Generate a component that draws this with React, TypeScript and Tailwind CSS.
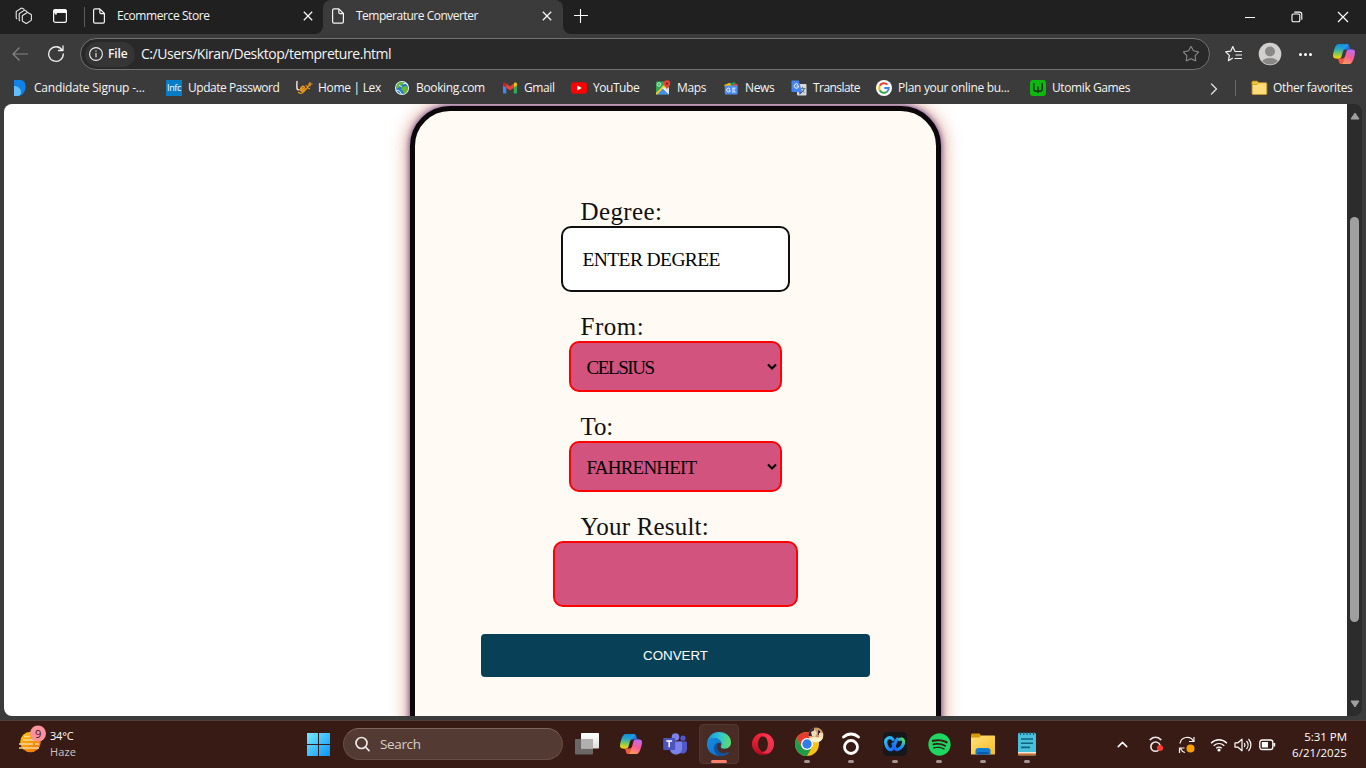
import React from "react";
import { ChevronRight, ChevronUp, Star } from "lucide-react";
import { FaSpotify } from "react-icons/fa";

type IconProps = { className?: string };

const PageIcon = ({ className = "" }: IconProps) => (
  <svg className={className} width="14" height="16" viewBox="0 0 14 16" fill="none" stroke="#f4f4f4" strokeWidth="1.2" strokeLinejoin="round">
    <path d="M1.6 2.2C1.6 1.4 2.1.8 3 .8h4.8l4.6 4.7v8.3c0 .8-.6 1.4-1.4 1.4H3c-.8 0-1.4-.6-1.4-1.4zM7.8 1v3.4c0 .7.4 1.2 1.2 1.2h3.2" />
  </svg>
);

const CloseIcon = ({ className = "" }: IconProps) => (
  <svg className={className} width="10" height="10" viewBox="0 0 10 10" stroke="#f4f4f4" strokeWidth="1.300"><path d="M.8.8l8.400 8.400M9.200.8L.8 9.200" /></svg>
);

const WorkspacesIcon = () => (
  <svg width="18" height="18" viewBox="0 0 18 18" fill="none" stroke="#e8e8e8" strokeWidth="1.1" strokeLinejoin="round" strokeLinecap="round">
    <path d="M7.900 8.200l4-2.500c.4-.2.800-.2 1.200 0l2.700 1.500c.4.2.600.5.600.9v4.600c0 .4-.2.700-.6.900l-3.900 2.600c-.4.200-.8.200-1.100 0l-2.900-1.600c-.4-.2-.6-.5-.6-.9V9.100c0-.4.200-.7.600-.9z" />
    <path d="M4.700 13.800c-.4-.2-.5-.5-.5-.9V7.100c0-.4.200-.7.600-.9l4.300-2.800c.4-.2.800-.2 1.100 0l1.800 1" />
    <path d="M1.700 11.700c-.4-.2-.5-.5-.5-.9V5c0-.4.200-.7.600-.9L6.200 1.300c.4-.2.800-.2 1.100 0l1.800 1" />
  </svg>
);

const TabActionsIcon = () => (
  <svg width="14" height="14" viewBox="0 0 14 14" fill="none" stroke="#f5f5f5" strokeWidth="1.2">
    <rect x=".6" y=".6" width="12.800" height="12.800" rx="2" />
    <path d="M.6 3.300V2.500c0-1 .8-1.900 1.900-1.900h9c1.100 0 1.900.9 1.900 1.900v.8z" fill="#fff" />
    <path d="M2.800 3.500v2" strokeWidth="2.200" />
  </svg>
);

const CopilotIcon = ({ id, size }: { id: string; size: number }) => (
  <svg width={size} height={size} viewBox="0 -1 24 24">
    <defs>
      <linearGradient id={id + "a"} x1="6" y1="0" x2="5" y2="16" gradientUnits="userSpaceOnUse">
        <stop stopColor="#0d91e1" /><stop offset=".35" stopColor="#2ba8c4" /><stop offset=".65" stopColor="#7fc85a" /><stop offset="1" stopColor="#ffd500" />
      </linearGradient>
      <linearGradient id={id + "b"} x1="20" y1="6" x2="13" y2="22" gradientUnits="userSpaceOnUse">
        <stop stopColor="#b66cf5" /><stop offset=".5" stopColor="#fa5c91" /><stop offset="1" stopColor="#ff9e60" />
      </linearGradient>
      <linearGradient id={id + "c"} x1="12" y1="0" x2="20" y2="7" gradientUnits="userSpaceOnUse">
        <stop stopColor="#25b7ff" /><stop offset="1" stopColor="#1648c8" />
      </linearGradient>
    </defs>
    <path fill={`url(#${id}c)`} d="M17.533 1.829A2.528 2.528 0 0015.11 0h-.737a2.531 2.531 0 00-2.484 2.087l-1.263 6.937.314-1.08a2.528 2.528 0 012.424-1.833h4.284l1.797.706 1.731-.706h-.505a2.528 2.528 0 01-2.423-1.829z" />
    <path fill="#f05b3d" d="M6.726 20.16A2.528 2.528 0 009.152 22h1.566c1.37 0 2.49-1.1 2.525-2.48l.17-6.69-.357 1.228a2.528 2.528 0 01-2.423 1.83h-4.32l-1.54-.842-1.667.843h.497c1.124 0 2.113.75 2.426 1.84z" />
    <path fill={`url(#${id}a)`} d="M15 0H6.252c-2.5 0-4 3.331-5 6.662-1.184 3.947-2.734 9.225 1.75 9.225H6.78c1.13 0 2.12-.753 2.43-1.847.657-2.317 1.809-6.359 2.713-9.436.46-1.563.842-2.906 1.43-3.742A1.97 1.97 0 0115 0" />
    <path fill={`url(#${id}b)`} d="M9 22h8.749c2.5 0 4-3.332 5-6.663 1.184-3.948 2.734-9.227-1.75-9.227H17.22c-1.129 0-2.12.754-2.43 1.848a1149.2 1149.2 0 01-2.713 9.437c-.46 1.564-.842 2.907-1.43 3.743A1.97 1.97 0 019 22" />
  </svg>
);

const CandidateIcon = () => (
  <svg width="16" height="16" viewBox="0 0 16 16">
    <path d="M2 0h6.500C12 0 13.600 3 13.600 7s-3 9-8 9H2z" fill="#1183e8" />
    <path d="M2 6c4 0 7 2.500 7 6.500 0 1.500-.8 3.500-3.400 3.500H2z" fill="#62bdf8" />
  </svg>
);
const InfosysIcon = () => (
  <div className="flex h-4 w-4 items-center justify-center bg-[#087dc7] font-['Open_Sans',sans-serif] text-[9px] leading-4 tracking-[-0.4px] text-white">Infc</div>
);
const LexIcon = () => (
  <svg className="-ml-px" width="18" height="16" viewBox="0 0 18 16" fill="none" strokeLinecap="round">
    <path d="M2 1.500c-.3 3-.3 5 0 7 .2 1 1 1.500 2 1.200" stroke="#e8ddd0" strokeWidth="1.500" />
    <path d="M5.500 9.500c3 0 4.500-1.700 3.500-2.800-1-1-3.400.5-3.400 3 0 2.300 3 1.800 5.400-.7" stroke="#f29a1b" strokeWidth="1.600" />
    <path d="M11 5.500c1.500 0 1.500 3.500 3.500 3M14 5.500c-1.500 1-2 3-3.500 4M3.500 12.500c2 1.500 4.500.5 6-1.500M15 2.500v3.300M13.500 4H17" stroke="#f29a1b" strokeWidth="1.200" />
  </svg>
);
const GlobeIcon = () => (
  <svg width="16" height="16" viewBox="0 0 16 16">
    <circle cx="8" cy="8" r="6.500" fill="#2979c8" stroke="#e7f2f5" strokeWidth="1.100" />
    <path d="M3 4.500c2-3 6-3 7-1.500L8 5 6 6 4.500 8 2 8.500zM8 7l4-1 2 2-1 4-3 2-1-3-2-1z" fill="#67b838" />
    <path d="M2.500 10l3 1 2 3M9 4l3-1 1.500 2.500M5 5l3 2" stroke="#d8f0f5" strokeWidth="1" fill="none" />
  </svg>
);
const GmailIcon = () => (
  <svg width="16" height="16" viewBox="0 0 16 16">
    <path d="M1 4.500v7.900c0 .6.500 1 1 1h2.300V7z" fill="#4285f4" />
    <path d="M15 4.500v7.900c0 .6-.5 1-1 1h-2.300V7z" fill="#34a853" />
    <path d="M11.700 4v3.700L15 5.200V4c0-1.500-1.600-2-2.600-1.200z" fill="#fbbc04" />
    <path d="M1 5.200l3.300 2.500V4l-.7-1.200C2.600 2 1 2.500 1 4z" fill="#c5221f" />
    <path d="M4.300 7.700V3.600L8 6.400l3.700-2.800v4.100L8 10.500z" fill="#ea4335" />
  </svg>
);
const YouTubeIcon = () => (
  <svg width="16" height="16" viewBox="0 0 16 16">
    <rect y="2.300" width="16" height="11.400" rx="3.200" fill="#f00" />
    <path d="M6.300 5.500v5L10.800 8z" fill="#fff" />
  </svg>
);
const MapsIcon = () => (
  <svg width="16" height="16" viewBox="0 0 16 16">
    <rect x="1" y="1.500" width="13" height="13" rx="1" fill="#32a854" />
    <path d="M11 5l3 3v5.500L6.500 7z" fill="#e5e5e5" />
    <path d="M1 13L10 4l1.500 1.500L2.500 14.500H1z" fill="#fbcc1b" />
    <path d="M8 8.200l6 6.300H2.600z" fill="#4a8af4" />
    <path d="M7.200 8L8 7.200l6 6v1.300z" fill="#f4f7fa" />
    <circle cx="4" cy="4.500" r="1.700" fill="none" stroke="#fff" strokeWidth=".8" />
    <path d="M12 10C11.800 7.500 8.700 6.500 8.700 3.600a3.300 3.300 0 116.600 0C15.300 6.500 12.200 7.500 12 10z" fill="#e94235" />
    <circle cx="12" cy="3.600" r="1.200" fill="#8b1d15" />
  </svg>
);
const NewsIcon = () => (
  <svg width="16" height="16" viewBox="0 0 16 16">
    <path d="M4 4l8-2 1.500 5H5z" fill="#0c9d58" />
    <path d="M1 5l6-2.300L9 8H3z" fill="#fbbc04" />
    <path d="M10 3.500l5 .8L14 9H9z" fill="#ea4335" />
    <rect x="1.800" y="5.500" width="12.800" height="9" rx="1" fill="#4e8df5" />
    <path d="M7 8.800a1.900 1.900 0 100 2.400V10H5.700M9 8.200h3.500M9 10h3M9 11.900h3.500" stroke="#fff" strokeWidth=".9" fill="none" />
  </svg>
);
const TranslateIcon = () => (
  <svg width="16" height="16" viewBox="0 0 16 16">
    <rect x="6" y="4" width="9.500" height="11.500" rx="1" fill="#d6d8da" />
    <path d="M8.500 8.500h6M11.500 7v1.500M13.500 8.500c-.7 2.300-2 3.600-3.500 4.500M10 9.500l3.500 3.500" stroke="#5b7580" strokeWidth=".9" />
    <path d="M1.500.5h6.200L11 12H1.500a1 1 0 01-1-1v-9.500a1 1 0 011-1z" fill="#4684f0" />
    <path d="M7.200 4.700a2.200 2.200 0 10.300 2.100V6H5.500" stroke="#fff" strokeWidth="1" fill="none" />
    <path d="M8 12h3l-2.300 3z" fill="#3257b7" />
  </svg>
);
const GoogleIcon = () => (
  <svg width="16" height="16" viewBox="0 0 16 16" fill="none" strokeWidth="2">
    <circle cx="8" cy="8" r="8" fill="#fff" />
    <path d="M11.400 4.600A4.800 4.800 0 003.700 5.800" stroke="#ea4335" />
    <path d="M3.700 5.800a4.800 4.800 0 000 4.400" stroke="#fbbc05" />
    <path d="M3.700 10.200a4.800 4.800 0 007.300 1.500" stroke="#34a853" />
    <path d="M11 11.700A4.800 4.800 0 0012.800 8H8.200" stroke="#4285f4" />
  </svg>
);
const UtomikIcon = () => (
  <svg width="16" height="16" viewBox="0 0 16 16">
    <rect width="16" height="16" rx="3" fill="#0bb80f" />
    <path d="M3.800 3v6c0 1.500 1 2.300 2.500 2.300h3.400c1.500 0 2.500-.8 2.500-2.300V3M8 6.500V13" stroke="#173019" strokeWidth="1.500" fill="none" />
  </svg>
);
const FavFolderIcon = () => (
  <svg width="17" height="16" viewBox="0 0 16 16">
    <path d="M.6 2.300c0-.6.4-1 1-1h4l1.700 1.500h7c.6 0 1 .4 1 1v9.700c0 .6-.4 1-1 1H1.600c-.6 0-1-.4-1-1z" fill="#ffdc7b" stroke="#c99a1c" strokeWidth=".8" />
    <path d="M.6 4.500V2.300c0-.6.4-1 1-1h4l1.500 1.600L5.500 4.500z" fill="#f3c43b" stroke="#c99a1c" strokeWidth=".8" />
  </svg>
);

const bookmarks: [string, React.ReactNode, string, string][] = [
  ["Candidate Signup -...", <CandidateIcon />, "w-[154px]", "tracking-[-0.19px]"],
  ["Update Password", <InfosysIcon />, "w-[130px]", "tracking-[-0.46px]"],
  ["Home | Lex", <LexIcon />, "w-[98px]", "tracking-[-0.3px]"],
  ["Booking.com", <GlobeIcon />, "w-[108px]", "tracking-[-0.35px]"],
  ["Gmail", <GmailIcon />, "w-[69px]", "tracking-[-0.4px]"],
  ["YouTube", <YouTubeIcon />, "w-[84px]", "tracking-[-0.45px]"],
  ["Maps", <MapsIcon />, "w-[68px]", "tracking-[-0.35px]"],
  ["News", <NewsIcon />, "w-[68px]", "tracking-[-0.35px]"],
  ["Translate", <TranslateIcon />, "w-[85px]", "tracking-[-0.55px]"],
  ["Plan your online bu...", <GoogleIcon />, "w-[154px]", "tracking-[-0.3px]"],
  ["Utomik Games", <UtomikIcon />, "w-[120px]", "tracking-[-0.4px]"],
];

const TabBar = () => (
  <div className="flex h-[34px] bg-[#202020] text-xs text-[#f5f5f5]">
    <div className="flex w-[84px] items-center pb-0.5 pl-[15px]">
      <WorkspacesIcon />
      <div className="ml-5"><TabActionsIcon /></div>
    </div>
    <div className="flex w-[239px] bg-[#3b3b3b]">
      <div className="flex w-full rounded-br-lg bg-[#202020]">
        <div className="mt-[7px] h-5 w-px bg-[#5a5a5a]" />
        <PageIcon className="ml-[7px] mt-2" />
        <span className="ml-[11px] mt-[7px] w-[186px] leading-[18px] tracking-[-0.42px]">Ecommerce Store</span>
        <CloseIcon className="mt-[11px] shrink-0" />
      </div>
    </div>
    <div className="bg-[#202020]">
      <div className="flex h-[34px] w-[240px] rounded-t-lg bg-[#3b3b3b]">
        <PageIcon className="ml-2 mt-2" />
        <span className="ml-[11px] mt-[7px] w-[186px] leading-[18px] tracking-[-0.49px]">Temperature Converter</span>
        <CloseIcon className="mt-[11px] shrink-0" />
      </div>
    </div>
    <div className="flex flex-1 bg-[#3b3b3b]">
      <div className="flex flex-1 items-start rounded-bl-lg bg-[#202020]">
        <svg className="ml-[11px] mt-[9px]" width="14" height="14" viewBox="0 0 14 14" stroke="#fff" strokeWidth="1.100"><path d="M0 6.500h14M6.500 0v14" /></svg>
        <div className="ml-auto flex items-center pt-[11px]">
          <div className="mr-[35px] h-px w-2.5 bg-white" />
          <svg className="ml-px" width="12" height="12" viewBox="0 0 12 12" fill="none" stroke="#fff" strokeWidth="1.100">
            <rect x="1" y="3" width="7.800" height="7.800" rx="1.300" />
            <path d="M3.300 1.100H8.500c1.300 0 2.300 1 2.300 2.300v5.300" />
          </svg>
          <svg className="ml-[34px] mr-[17px]" width="12" height="12" viewBox="0 0 12 12" stroke="#fff" strokeWidth="1.200"><path d="M1 1l10 10M11 1L1 11" /></svg>
        </div>
      </div>
    </div>
  </div>
);

const Toolbar = () => (
  <div className="flex h-[39px] items-center bg-[#3b3b3b] pt-px text-[#f5f5f5]">
    <svg className="ml-3" width="16" height="14" viewBox="0 0 16 14" fill="none" stroke="#858585" strokeWidth="1.200"><path d="M16 7H1M7.500.5L1 7l6.500 6.500" /></svg>
    <svg className="ml-5" width="16" height="18" viewBox="0 0 16 18" fill="none" stroke="#efefef" strokeWidth="1.300" strokeLinecap="round" strokeLinejoin="round">
      <path d="M15.300 9A7.300 7.300 0 1114.200 5.200M15 1v4.500h-4.500" />
    </svg>
    <div className="ml-4 flex h-8 w-[1130px] items-center rounded-full border border-[#717171] bg-[#292929] pl-1">
      <div className="flex h-[25px] w-[50px] items-center rounded-full bg-[#353535] pl-1">
        <svg width="14" height="14" viewBox="0 0 14 14" fill="none" stroke="#eee" strokeWidth="1.100"><circle cx="7" cy="7" r="6.400" /><path d="M7 6v4.300M7 3.500v1.300" /></svg>
        <span className="ml-[5px] text-xs font-semibold tracking-[-0.1px]">File</span>
      </div>
      <span className="ml-1.5 text-sm tracking-[-0.45px]">C:/Users/Kiran/Desktop/tempreture.html</span>
      <Star className="ml-auto mr-[9px] text-[#8d8d8d]" size={18} strokeWidth={1.400} />
    </div>
    <svg className="ml-[15px]" width="18" height="18" viewBox="0 0 18 18" fill="none" stroke="#f3f3f3" strokeWidth="1.200" strokeLinejoin="round">
      <path d="M10 6.500L7.800 1.500 5.700 6.200l-5 .7 3.700 3.500-1 5.300 4.400-2.700M10 6.500h7M10.500 10h6.500M9.500 13.500H17" />
    </svg>
    <svg className="ml-[15px]" width="24" height="24" viewBox="0 0 24 24">
      <defs><clipPath id="avatar"><circle cx="12" cy="12" r="10.500" /></clipPath></defs>
      <circle cx="12" cy="12" r="11.300" fill="#d2d0ce" />
      <g clipPath="url(#avatar)" fill="#8a8886"><circle cx="12" cy="9.500" r="5" /><ellipse cx="12" cy="21" rx="8.500" ry="5" /></g>
    </svg>
    <div className="ml-[17px] flex gap-0.5">
      <i className="h-[3px] w-[3px] rounded-full bg-white" /><i className="h-[3px] w-[3px] rounded-full bg-white" /><i className="h-[3px] w-[3px] rounded-full bg-white" />
    </div>
    <div className="ml-[21px]"><CopilotIcon id="tb" size={22} /></div>
  </div>
);

const Bookmarks = () => (
  <div className="flex h-[31px] items-center bg-[#3b3b3b] pb-px pl-3 text-xs leading-4 text-[#f5f5f5]">
    {bookmarks.map(([label, icon, width, tracking]) => (
      <div key={label} className={`flex shrink-0 items-center whitespace-nowrap ${width}`}>
        <div className="w-[22px] shrink-0">{icon}</div>
        <span className={tracking}>{label}</span>
      </div>
    ))}
    <ChevronRight className="ml-[54px] mt-px shrink-0 text-[#ddd]" size={20} strokeWidth={1.600} />
    <div className="ml-[11px] h-4 w-px shrink-0 bg-[#686868]" />
    <div className="ml-[15px] flex w-[110px] items-center whitespace-nowrap">
      <div className="w-[22px] shrink-0"><FavFolderIcon /></div>
      <span className="tracking-[-0.32px]">Other favorites</span>
    </div>
  </div>
);

const SelectBox = ({ value, tracking }: { value: string; tracking: string }) => (
  <div className="flex h-[51px] w-[213px] shrink-0 items-center justify-between self-center rounded-[10px] border-2 border-[#ff0000] bg-[#d3537f] pl-4 pr-[3px] text-[19px] text-black">
    <span className={`pt-[3px] ${tracking}`}>{value}</span>
    <svg width="10" height="8" viewBox="0 0 10 8" fill="none" stroke="#000" strokeWidth="2.100"><path d="M1 1.500l4 4 4-4" /></svg>
  </div>
);

const labelClass = "ml-[100px] flex h-[30px] shrink-0 items-end text-[25px] leading-[28px] text-[#111]";

const Converter = () => (
  <div className="flex h-[612px] justify-center overflow-hidden rounded-l-lg bg-white pt-0.5 pr-px font-['Liberation_Serif',serif]">
    <div className="flex h-[760px] w-[531px] shrink-0 flex-col rounded-[40px] border-[5px] border-[#0c080a] bg-[#fffaf4] px-[66px] pt-[85px] shadow-[0_0_6px_0_rgba(78,40,150,0.9),0_0_18px_2px_rgba(205,125,95,0.8)]">
      <label className={labelClass}><span className="tracking-[0.4px]">Degree:</span></label>
      <div className="flex h-[66px] w-[229px] shrink-0 items-center self-center rounded-[10px] border-2 border-[#101010] bg-white pl-5 text-[19.5px] text-black">
        <span className="pt-0.5 tracking-[-0.6px]">ENTER DEGREE</span>
      </div>
      <div className="h-[19px] shrink-0" />
      <label className={labelClass}><span className="tracking-[0.5px]">From:</span></label>
      <SelectBox value="CELSIUS" tracking="tracking-[-1.4px]" />
      <div className="h-[19px] shrink-0" />
      <label className={labelClass}><span className="tracking-[-0.1px]">To:</span></label>
      <SelectBox value="FAHRENHEIT" tracking="tracking-[-0.8px]" />
      <div className="h-[19px] shrink-0" />
      <label className={labelClass}><span className="tracking-[0.2px]">Your Result:</span></label>
      <div className="h-[66px] w-[245px] shrink-0 self-center rounded-[10px] border-2 border-[#ff0000] bg-[#d3537f]" />
      <button className="mt-[27px] h-[43px] shrink-0 rounded bg-[#084058] pl-px font-['Liberation_Sans',sans-serif] text-[13.333px] text-white">CONVERT</button>
    </div>
  </div>
);

const Scrollbar = () => (
  <div className="flex w-[15px] flex-col items-center rounded-r-lg bg-[#2c2c2c]">
    <svg className="mt-[8px]" width="10" height="8" viewBox="0 0 10 8"><path d="M5 1L9 7H1z" fill="#a0a0a0" stroke="#a0a0a0" strokeLinejoin="round" /></svg>
    <div className="mt-[97px] h-[405px] w-[9px] rounded-full bg-[#9f9f9f]" />
    <svg className="mt-[78px]" width="10" height="8" viewBox="0 0 10 8"><path d="M5 7L1 1h8z" fill="#a0a0a0" stroke="#a0a0a0" strokeLinejoin="round" /></svg>
  </div>
);

const WeatherIcon = () => (
  <svg width="28" height="30" viewBox="0 0 28 30">
    <defs><linearGradient id="sun" x1="0" y1="0" x2="1" y2="1"><stop stopColor="#ffc400" /><stop offset="1" stopColor="#ed6c0b" /></linearGradient></defs>
    <circle cx="12.500" cy="18" r="10.300" fill="url(#sun)" />
    <path d="M6 12.500h6M5 16h19M1 20h14M17 20h4M1 24h20" stroke="#efd9a2" strokeWidth="1.600" />
    <circle cx="20" cy="9.500" r="8" fill="#fc929b" />
  </svg>
);
const WindowsIcon = () => (
  <svg width="24" height="24" viewBox="0 0 24 24">
    <defs><linearGradient id="win" x1="0" y1="0" x2="24" y2="24" gradientUnits="userSpaceOnUse"><stop stopColor="#7cecff" /><stop offset="1" stopColor="#0a95f8" /></linearGradient></defs>
    <path fill="url(#win)" d="M1 1h11v11H1zM13 1h11v11H13zM1 13h11v11H1zM13 13h11v11H13z" />
  </svg>
);
const TaskViewIcon = () => (
  <svg width="24" height="24" viewBox="0 0 24 24">
    <defs><linearGradient id="tv" x1="0" y1="0" x2="0" y2="1"><stop stopColor="#fff" /><stop offset="1" stopColor="#ddd" /></linearGradient></defs>
    <rect x="0" y="7" width="18" height="15.500" rx=".7" fill="#6a6766" />
    <rect x="6" y="1" width="18" height="15.500" rx=".7" fill="url(#tv)" /><path d="M6 7h12v9.500H6z" fill="#b1afaf" />
  </svg>
);
const TeamsIcon = () => (
  <svg width="26" height="24" viewBox="0 0 26 24">
    <circle cx="13.500" cy="5" r="3.800" fill="#7b83eb" /><circle cx="21" cy="6.200" r="2.600" fill="#5059c9" />
    <path d="M16 9.500h8c.6 0 1 .4 1 1v6c0 3-1.500 5-4.500 5s-4.500-2-4.500-5z" fill="#5059c9" />
    <path d="M8 9.500h11c.6 0 1 .4 1 1v6.500c0 3-2.500 5.500-6 5.500s-6-2.500-6-5.500z" fill="#7b83eb" />
    <rect x="1.200" y="6" width="12" height="12" rx="1" fill="#4b53bc" />
    <path d="M4.300 9h5.800M7.200 9v6.300" stroke="#fff" strokeWidth="1.500" />
  </svg>
);
const EdgeIcon = () => (
  <svg width="26" height="26" viewBox="0 0 26 26">
    <defs>
      <linearGradient id="eg" x1="1" y1="8" x2="25" y2="12" gradientUnits="userSpaceOnUse"><stop stopColor="#1499dd" /><stop offset=".5" stopColor="#2fc3d6" /><stop offset="1" stopColor="#62dd62" /></linearGradient>
      <linearGradient id="eb" x1="2" y1="10" x2="20" y2="25" gradientUnits="userSpaceOnUse"><stop stopColor="#1689df" /><stop offset="1" stopColor="#0b6ac4" /></linearGradient>
    </defs>
    <path d="M1 12.500C1.600 5.800 6.500 1 13 1c7 0 12 4.600 12 10.500 0 4-3 6.200-6.300 6.200-2.500 0-4-1-4-2 0-.7.800-1.200.8-2.700C15.500 9.500 11.500 7 8 7c-3.500 0-6 2-7 5.500z" fill="url(#eg)" />
    <path d="M1 13.500C1.200 9.500 4 7 8 7c4 0 7.500 2.500 7.500 6-1-1.500-5.500-2-6 3.500-.4 4.500 5 8 10 5.800 1.600-.7 2.800-1.200 3.500-1-.9 1.900-4.500 3.700-9.300 3.700C6.500 25 1 20 1 13.500z" fill="url(#eb)" />
    <path d="M12.500 11.500C9.500 12 8 14.500 8 17c0 4 2.500 6.700 5.500 8 3.500.3 7.200-1 9.400-3.700-4.600 2.200-9.900.8-11.400-3-.9-2.300-.6-4.600 1-6.800z" fill="#10529d" />
  </svg>
);
const OperaIcon = () => (
  <svg width="24" height="24" viewBox="0 0 24 24">
    <defs><linearGradient id="op" x1="0" y1="0" x2="0" y2="1"><stop stopColor="#ff2741" /><stop offset="1" stopColor="#b30a20" /></linearGradient></defs>
    <path fillRule="evenodd" fill="url(#op)" d="M12 1a11 11 0 100 22 11 11 0 000-22zm0 3.200c3 0 4.900 3.400 4.900 7.800S15 19.800 12 19.800 7.100 16.400 7.100 12 9 4.200 12 4.200z" />
    <path d="M12 4.200C9.800 4.200 8 5.800 7.700 8.500 9.200 3.500 14 1.500 18.500 3.200 22 6 23 9 23 12s-1.500 7-4.500 8.900c-4 1.600-8.500 0-10.800-5.400.3 2.700 2.100 4.300 4.300 4.300 3 0 4.900-3.400 4.900-7.800S15 4.200 12 4.200z" fill="#ff4058" opacity=".65" />
  </svg>
);
const ChromeIcon = () => (
  <svg width="30" height="30" viewBox="0 0 30 30">
    <defs><clipPath id="face"><circle cx="21" cy="8" r="7.500" /></clipPath></defs>
    <circle cx="12" cy="17" r="12" fill="#fbc116" />
    <path d="M12 5a12 12 0 00-10.400 6l5.200 9 5.200-8.500h10.500A12 12 0 0012 5z" fill="#e63b2e" />
    <path d="M1.600 11a12 12 0 0010.400 18l5.200-9-5.200 2.500-5.200-2.500z" fill="#229a48" />
    <circle cx="12" cy="17" r="6" fill="#fff" /><circle cx="12" cy="17" r="4.700" fill="#2f7de9" />
    <g clipPath="url(#face)">
      <path fill="#c99c68" d="M13 0h17v17H13z" /><path d="M13 0h6v9h-6zM23 3l2 1v4h-2z" fill="#33263a" />
      <path d="M16 5l4-2 2 3-2 4-3-1zM24 6h4v5h-4z" fill="#f1dcb3" /><path d="M13 11l6-1 11 1v6H13z" fill="#fff2c9" />
    </g>
  </svg>
);
const RingIcon = ({ size = 24, color = "#fff", stroke = 2.8 }: { size?: number; color?: string; stroke?: number }) => (
  <svg width={size} height={size} viewBox="0 0 24 24" fill="none" stroke={color} strokeWidth={stroke} strokeLinecap="round">
    <circle cx="12" cy="15" r="6.500" /><path d="M4.500 5c4.500-4 10.500-4 15 0" />
  </svg>
);
const WebexIcon = () => (
  <svg width="26" height="26" viewBox="0 0 26 26">
    <defs>
      <linearGradient id="wx" x1="0" x2="1" y1="0" y2="1"><stop stopColor="#30c7ef" /><stop offset="1" stopColor="#175bff" /></linearGradient>
      <linearGradient id="wy" x1="1" x2="0" y1="0" y2="1"><stop stopColor="#58df55" /><stop offset=".35" stopColor="#20a5e8" /><stop offset="1" stopColor="#1559ff" /></linearGradient>
    </defs>
    <rect x="1" y="1" width="24" height="24" rx="4.500" fill="#15191c" />
    <g fill="none" strokeWidth="3.200" strokeLinecap="round">
      <path d="M11 8.500C8 4.800 3 7.500 3.700 12c.7 4.500 3.500 7.500 5.800 6.500 3-1.500 3.500-8.500 6-10.500" stroke="url(#wx)" />
      <path d="M11 13c1 3 2.500 6.500 5 5.500 3.500-1 6-5.500 5.500-8.500-.3-2-2.500-2.500-4-1.500" stroke="url(#wy)" />
    </g>
  </svg>
);
const FolderIcon = () => (
  <svg width="26" height="24" viewBox="0 0 26 24">
    <defs><linearGradient id="fo" x1="0" y1="0" x2="1" y2="1"><stop stopColor="#ffe07a" /><stop offset="1" stopColor="#f9bd26" /></linearGradient></defs>
    <path d="M1 3c0-1 .6-1.500 1.500-1.500h7l2.500 3v5H1z" fill="#d89b05" /><path d="M1 5.500h8l2.500-2H24c.6 0 1 .4 1 1v18H1z" fill="url(#fo)" />
    <path d="M5.500 22.500V19c0-2 1-3 3-3h9c2 0 3 1 3 3v3.500z" fill="#137cd5" /><path d="M9 20h8c1.200 0 1.700.6 1.700 1.600v.9H7.300v-.9C7.300 20.600 7.800 20 9 20z" fill="#075caf" />
  </svg>
);
const NotepadIcon = () => (
  <svg width="20" height="24" viewBox="0 0 20 24">
    <rect x="1" y="1" width="18" height="22.500" rx="1.300" fill="#49bfd9" /><path d="M1 20.500h18v2c0 .6-.4 1-1 1H2c-.6 0-1-.4-1-1z" fill="#ce6b23" /><path d="M1 20h18v1.500H1z" fill="#ece7df" />
    <path d="M3.500 0v3M6.800 0v3M10 0v3M13.200 0v3M16.500 0v3" stroke="#155d7d" strokeWidth="1.200" /><path d="M4 7h12M4 11.200h12M4 15.400h9" stroke="#0d6381" strokeWidth="1.600" />
  </svg>
);

const taskApps: { icon: React.ReactNode; running?: boolean; active?: boolean }[] = [
  { icon: <TaskViewIcon /> },
  { icon: <CopilotIcon id="task" size={22} /> },
  { icon: <TeamsIcon /> },
  { icon: <EdgeIcon />, active: true },
  { icon: <OperaIcon /> },
  { icon: <div className="-mt-[5px] ml-1.5"><ChromeIcon /></div>, running: true },
  { icon: <RingIcon />, running: true },
  { icon: <WebexIcon />, running: true },
  { icon: <FaSpotify size={23} color="#1ed760" />, running: true },
  { icon: <FolderIcon />, running: true },
  { icon: <NotepadIcon />, running: true },
];

const Taskbar = () => (
  <div className="flex h-12 items-start border-t border-[#50403b] bg-[#371b14] text-white">
    <div className="flex w-[306px] pl-[18px] pt-[3px]">
      <div className="relative"><WeatherIcon /><span className="absolute left-[17px] top-[2px] text-[11px] leading-4 text-[#3d161a]">9</span></div>
      <div className="ml-1 pt-1 text-[11px] leading-4"><div className="tracking-[-0.2px]">34°C</div><div className="tracking-[0.1px] text-[#cfc6c4]">Haze</div></div>
    </div>
    <div className="w-[37px] pt-[11px]"><WindowsIcon /></div>
    <div className="mt-[7px] flex h-8 w-[220px] items-center rounded-full border border-[#654c46] border-t-[#7b6660] bg-[#533b34] pl-[11px]">
      <svg width="16" height="16" viewBox="0 0 16 16" fill="none" stroke="#ece8e7" strokeWidth="1.700"><circle cx="6.500" cy="7" r="5.500" /><path d="M10.500 11l3.500 3.700" strokeLinecap="round" /></svg>
      <span className="ml-[9px] text-[13.5px] tracking-[-0.35px] text-[#d7ceca]">Search</span>
    </div>
    <div className="ml-0.5 flex pt-[3px]">
      {taskApps.map((app, i) => (
        <div key={i} className="w-11 px-0.5">
          <div className={`flex h-10 w-10 flex-col items-center rounded ${app.active ? "border border-[#533832] bg-[#4a2c26]" : "border border-transparent"}`}>
            <div className="flex h-[38px] shrink-0 items-center">{app.icon}</div>
            {app.active && <div className="-mt-[3px] h-[3px] w-4 shrink-0 rounded-full bg-[#fb8065]" />}
            {app.running && <div className="-mt-[3px] h-[3px] w-1.5 shrink-0 rounded-full bg-[#a29490]" />}
          </div>
        </div>
      ))}
    </div>
    <div className="ml-auto flex h-[47px] items-center pr-[19px]">
      <ChevronUp size={17} strokeWidth={2.100} />
      <div className="relative ml-[16px]"><RingIcon size={17} color="#e9e5e8" stroke={2.4} /><i className="absolute bottom-[2px] right-[1px] h-1.5 w-1.5 rounded-full bg-[#fc3c35]" /></div>
      <svg className="ml-[14px]" width="18" height="18" viewBox="0 0 18 18" fill="none" stroke="#f6f2f0" strokeWidth="1.200"><path d="M2 7.500a7.300 7.300 0 0113.500-2.500M16 1v4.500h-5M7 16.500a7 7 0 01-4.500-4M1.500 17v-5h5" /><circle cx="12.500" cy="12.500" r="4" fill="#ffa000" stroke="none" /></svg>
      <svg className="ml-[14px]" width="18" height="16" viewBox="0 0 18 16" fill="none" stroke="#fff" strokeWidth="1.300"><path d="M1 6.200c4.800-4.600 11.200-4.600 16 0M3.700 8.800c3.200-3 7.400-3 10.600 0M6.200 11.300c1.700-1.500 3.900-1.500 5.600 0" /><circle cx="9" cy="13" r="1.600" fill="#fff" stroke="none" /></svg>
      <svg className="ml-1.5" width="18" height="16" viewBox="0 0 18 16" fill="none" stroke="#fff" strokeWidth="1.200" strokeLinejoin="round"><path d="M1 5.800h3L8 2.200v11.600l-4-3.600H1zM10.300 6c.8 1.200.8 2.800 0 4M12.500 4c2 2.300 2 5.700 0 8M14.500 2c3.200 3.500 3.200 8.500 0 12" /></svg>
      <svg className="ml-[7px]" width="17" height="12" viewBox="0 0 17 12" fill="none" stroke="#fff" strokeWidth="1.300"><rect x=".8" y="1" width="13" height="9.500" rx="2.200" /><path d="M2.800 3h6.200v5.500H2.800z" fill="#fff" stroke="none" /><path d="M15.300 4v3.500" strokeWidth="1.800" /></svg>
      <div className="w-[71px] text-right text-[11.5px] leading-4"><div className="tracking-[-0.05px]">5:31 PM</div><div className="tracking-[0.05px]">6/21/2025</div></div>
    </div>
  </div>
);

export default function App() {
  return (
    <div className="h-[768px] w-[1366px] overflow-hidden bg-[#3b3b3b] font-['Open_Sans',sans-serif]">
      <TabBar />
      <Toolbar />
      <Bookmarks />
      <div className="grid h-[616px] grid-cols-[1343px_15px] pb-1 pl-1">
        <Converter />
        <Scrollbar />
      </div>
      <Taskbar />
    </div>
  );
}
